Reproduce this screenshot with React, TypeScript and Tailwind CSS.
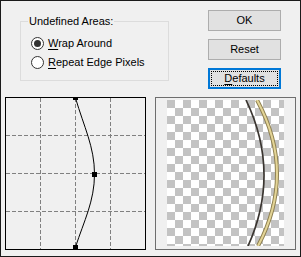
import React from "react";

function Radio({ checked, label }: { checked?: boolean; label: string }) {
  return (
    <div className="flex h-[14px] items-center gap-[4px]">
      <span className="flex h-[13px] w-[13px] items-center justify-center rounded-full border border-[#333] bg-white">
        {checked && <span className="h-[7px] w-[7px] rounded-full bg-[#333]" />}
      </span>
      <span>
        <span className="underline underline-offset-[2px]">{label[0]}</span>
        {label.slice(1)}
      </span>
    </div>
  );
}

function Btn({ children, focused }: { children: React.ReactNode; focused?: boolean }) {
  if (focused) {
    return (
      <button className="h-[21px] w-[73px] border-2 border-[#0078d7] bg-[#e1e1e1] p-[1px]">
        <span className="flex h-full w-full items-center justify-center border border-dotted border-black">
          {children}
        </span>
      </button>
    );
  }
  return (
    <button className="flex h-[21px] w-[73px] items-center justify-center border border-[#adadad] bg-[#e1e1e1]">
      {children}
    </button>
  );
}

export default function App() {
  return (
    <div
      className="flex h-[257px] w-[301px] flex-col border border-[#1a1a1a] bg-[#f0f0f0] text-[11px] leading-[13px] text-black"
      style={{ fontFamily: '"Liberation Sans", Arial, sans-serif' }}
    >
      {/* top row */}
      <div className="flex h-[96px] items-start">
        <fieldset className="ml-[19px] mt-[14px] h-[66px] w-[149px] border border-[#dcdcdc]">
          <legend className="ml-[7px] px-[1px]">Undefined Areas:</legend>
          <div className="mt-[8px] flex flex-col gap-[5px] pl-[10px]">
            <Radio checked label="Wrap Around" />
            <Radio label="Repeat Edge Pixels" />
          </div>
        </fieldset>
        <div className="ml-[39px] mt-[9px] flex flex-col gap-[8px]">
          <Btn>OK</Btn>
          <Btn>Reset</Btn>
          <Btn focused>
            <span className="underline underline-offset-[2px]">D</span>efaults
          </Btn>
        </div>
      </div>

      {/* bottom row */}
      <div className="flex gap-[9px] pl-[4px]">
        <div className="h-[153px] w-[141px] border border-black">
          <svg width="139" height="151" viewBox="1 1 139 151" className="block">
            <g stroke="#808080" strokeWidth="1" strokeDasharray="4 2" shapeRendering="crispEdges">
              <line x1="35.5" y1="1" x2="35.5" y2="152" />
              <line x1="70.5" y1="1" x2="70.5" y2="152" />
              <line x1="105.5" y1="1" x2="105.5" y2="152" />
              <line x1="1" y1="38.5" x2="140" y2="38.5" />
              <line x1="1" y1="76.5" x2="140" y2="76.5" />
              <line x1="1" y1="114.5" x2="140" y2="114.5" />
            </g>
            <path
              d="M70.5 1 C 79 30 89.5 50 89.5 77 C 89.5 104 79 124 70.5 150"
              fill="none"
              stroke="#000"
              strokeWidth="1"
            />
            <rect x="68" y="-1" width="5" height="4" fill="#000" />
            <rect x="87" y="75" width="5" height="5" fill="#000" />
            <rect x="68" y="148" width="5" height="4" fill="#000" />
          </svg>
        </div>
        <div className="h-[153px] w-[141px] border border-[#6e6e6e] pl-[11px] pt-[2px]">
          <div className="relative h-[146px] w-[117px] overflow-hidden bg-[repeating-conic-gradient(#ffffff_0_25%,#c3c3c3_0_50%)] bg-[length:16px_16px]">
            <svg width="117" height="146" className="absolute left-0 top-0">
              <path d="M79 0 Q 114 73 81 146" fill="none" stroke="#3b3631" strokeWidth="1.7" />
              <path d="M90 0 Q 129.5 73 91 146" fill="none" stroke="#8f8152" strokeWidth="4" />
              <path d="M90 0 Q 129.5 73 91 146" fill="none" stroke="#e4d597" strokeWidth="2" />
            </svg>
          </div>
        </div>
      </div>
    </div>
  );
}
